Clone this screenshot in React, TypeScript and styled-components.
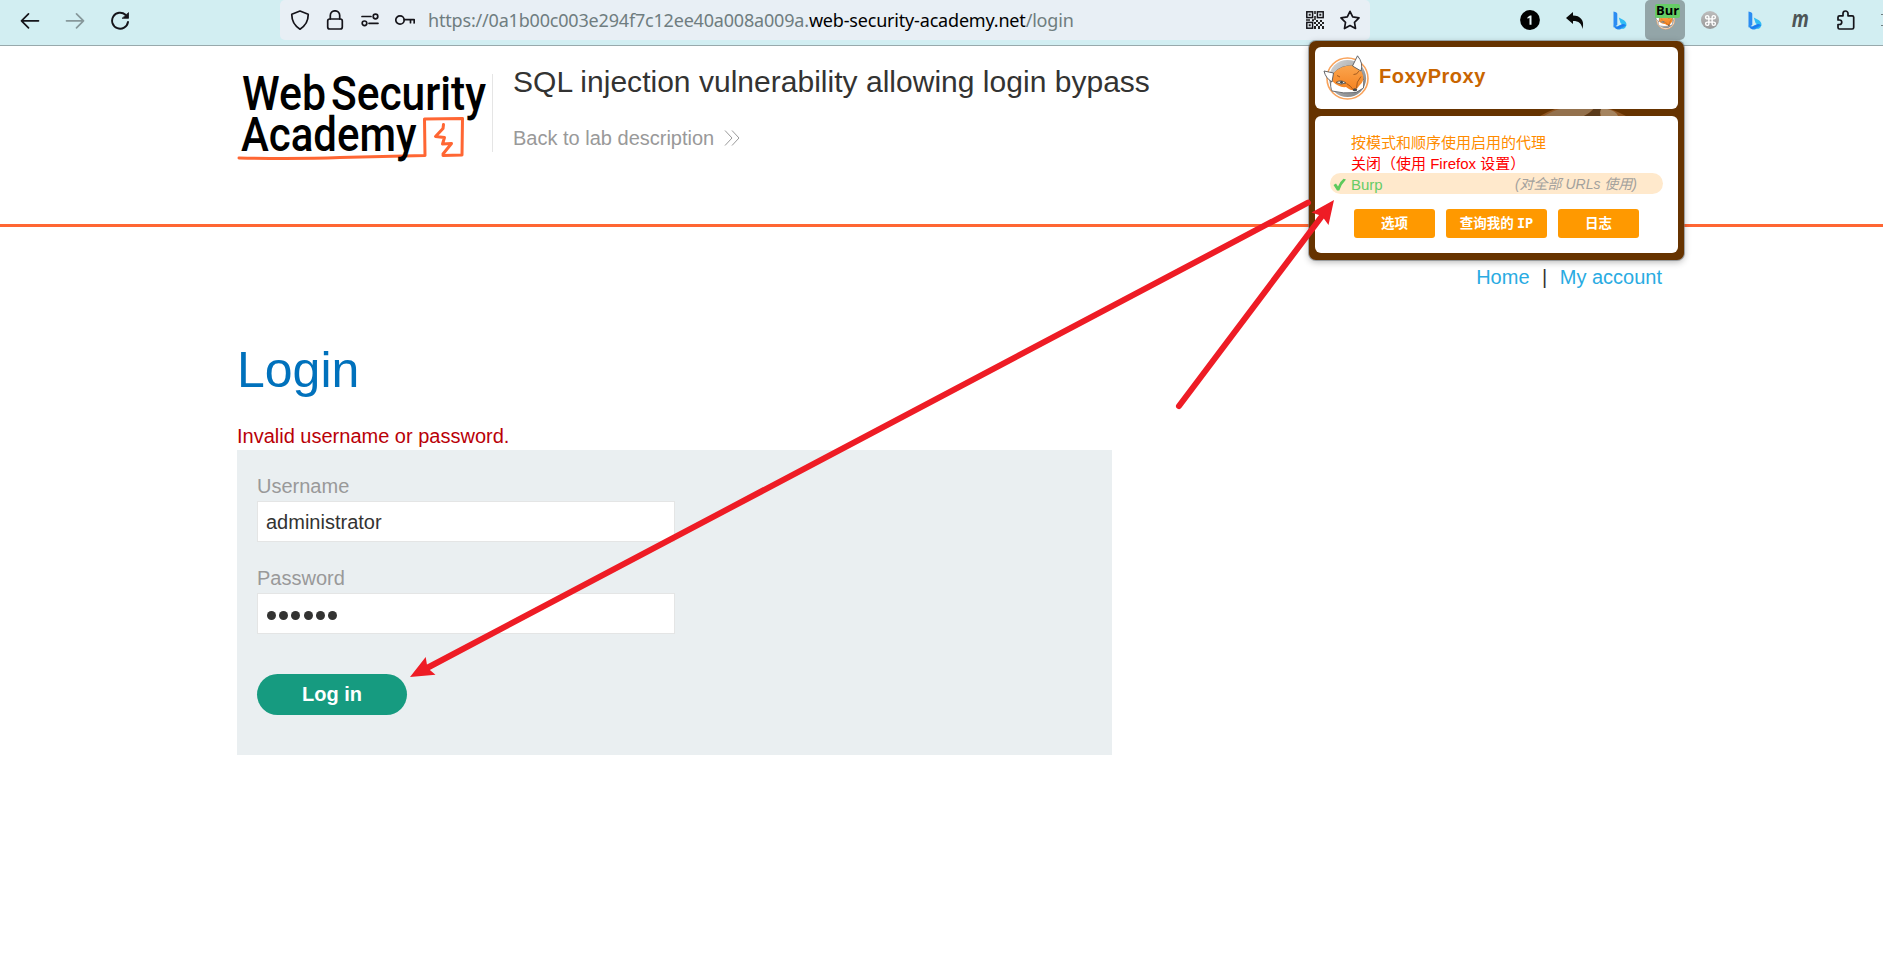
import React from 'react';
import styled, { createGlobalStyle } from 'styled-components';
import { Command } from 'lucide-react';

const GlobalStyle = createGlobalStyle`
  * { box-sizing: border-box; }
  body {
    margin: 0;
    background: #fff;
    color: #333332;
    font-family: "Liberation Sans", "Noto Sans CJK SC", sans-serif;
    font-size: 20px;
    overflow: hidden;
  }
`;

const Page = styled.div`
  position: relative;
  width: 1883px;
  height: 958px;
  overflow: hidden;
`;

/* ---------- browser toolbar ---------- */

const Toolbar = styled.div`
  display: flex;
  align-items: flex-start;
  height: 46px;
  background: #d2eef2;
  border-bottom: 1px solid #98a9ac;
`;

const NavButtons = styled.div`
  display: flex;
  align-items: center;
  flex: none;
  width: 280px;
  height: 40px;
  padding-left: 20px;
  gap: 25px;
`;

const Icon = styled.svg<{ $size?: number }>`
  display: block;
  flex: none;
  width: ${(p) => p.$size ?? 20}px;
  height: ${(p) => p.$size ?? 20}px;
  fill: none;
  stroke: #15141a;
  stroke-width: 1.7;
  stroke-linecap: round;
  stroke-linejoin: round;
`;

const FadedIcon = styled(Icon)`
  stroke: #87989b;
`;

const AddressBar = styled.div`
  display: flex;
  align-items: center;
  flex: none;
  width: 1090px;
  height: 40px;
  padding: 0 10px;
  border-radius: 5px;
  background: #e8eff5;
`;

const SiteIcons = styled.div`
  display: flex;
  gap: 15px;
  width: 138px;
`;

const Url = styled.div`
  flex: 1;
  font-family: "Noto Sans", sans-serif;
  font-size: 18px;
  line-height: 40px;
  letter-spacing: -0.185px;
  white-space: nowrap;
  color: #6f7d80;
`;

const Domain = styled.span`
  color: #000;
`;

const BarActions = styled.div`
  display: flex;
  gap: 15px;
`;

const Extensions = styled.div`
  display: flex;
  align-items: center;
  flex: none;
  height: 40px;
  padding-left: 140px;
  gap: 5px;
`;

const ExtButton = styled.div<{ $active?: boolean }>`
  position: relative;
  display: flex;
  align-items: center;
  justify-content: center;
  flex: none;
  width: 40px;
  height: 40px;
  border-radius: 5px;
  background: ${(p) => (p.$active ? '#93a5a8' : 'transparent')};
`;

const ExtBadge = styled.span`
  position: absolute;
  left: 10px;
  top: 4px;
  width: 25px;
  height: 14px;
  border-radius: 2px;
  background: #66cc66;
  color: #000;
  font: bold 13px/13px "Open Sans", sans-serif;
  text-align: center;
`;

const LetterIcon = styled.span`
  display: block;
  font: italic 700 23px/30px "Open Sans", sans-serif;
  color: #4d5557;
  transform: translateY(-2px) scaleX(0.82);
`;

const GreyDisc = styled.div`
  display: flex;
  align-items: center;
  justify-content: center;
  width: 18px;
  height: 18px;
  border-radius: 50%;
  background: linear-gradient(#bdbdbd, #999);
`;

const OverflowDots = styled.div`
  width: 3px;
  height: 12px;
  margin-left: 11px;
  border-top: 1px solid #6f7d80;
  border-bottom: 1px solid #6f7d80;
`;

/* ---------- lab header ---------- */

const LabHeader = styled.header`
  display: flex;
  height: 181px;
  padding: 5px 0 0 237px;
  border-bottom: 3px solid #ff6633;
`;

const Logo = styled.svg`
  width: 255px;
  height: 120px;
  flex: none;
  overflow: visible;
`;

const LabTitle = styled.div`
  height: 78px;
  margin-top: 23px;
  padding-left: 20px;
  border-left: 1px solid #e5e5e5;
`;

const LabName = styled.h2`
  margin: -10px 0 0;
  font-size: 30px;
  line-height: 36px;
  letter-spacing: 0.02px;
  font-weight: 400;
  white-space: nowrap;
`;

const BackLink = styled.a`
  display: flex;
  align-items: center;
  gap: 10px;
  margin-top: 26px;
  line-height: 24px;
  color: #999;
`;

/* ---------- page body ---------- */

const Main = styled.main`
  width: 1425px;
  margin-left: 237px;
`;

const AccountNav = styled.nav`
  display: flex;
  justify-content: flex-end;
  gap: 12.5px;
  padding-top: 38px;
  line-height: 24px;
`;

const NavLink = styled.a`
  color: #29abe2;
`;

const Heading = styled.h1`
  margin: 51px 0 0;
  font-size: 50px;
  line-height: 60px;
  font-weight: 400;
  color: #0071bc;
`;

const ErrorText = styled.p`
  margin: 22px 0 0;
  line-height: 28px;
  color: #b90007;
`;

const LoginForm = styled.div`
  width: 875px;
  height: 305px;
  padding: 20px;
  background: #eaeff1;
`;

const Label = styled.label`
  display: block;
  height: 31px;
  line-height: 33px;
  color: #999;
`;

const Field = styled.div`
  display: flex;
  align-items: center;
  width: 418px;
  height: 41px;
  margin-bottom: 20px;
  padding: 2px 8px 0;
  border: 1px solid #e4e5e5;
  background: #fff;
`;

const PasswordDots = styled.div`
  display: flex;
  gap: 3.2px;
  padding: 1px 0 0 1px;
`;

const Dot = styled.span`
  width: 9px;
  height: 9px;
  border-radius: 50%;
  background: #333332;
`;

const LoginButton = styled.button`
  display: block;
  width: 150px;
  height: 41px;
  margin-top: 40px;
  padding: 0;
  border: 0;
  border-radius: 21px;
  background: #169b80;
  color: #fff;
  font: bold 20px/41px "Liberation Sans", sans-serif;
`;

/* ---------- extension popup ---------- */

const Popup = styled.aside`
  position: absolute;
  left: 1309px;
  top: 41px;
  width: 375px;
  height: 219px;
  display: flex;
  flex-direction: column;
  gap: 7px;
  padding: 6px;
  border-radius: 7px;
  background: #663300;
  box-shadow: 0 0 0 1px rgba(110, 115, 118, 0.55), 0 2px 7px rgba(0, 0, 0, 0.3);
`;

const Watermark = styled.svg`
  position: absolute;
  left: 225px;
  top: 68px;
  width: 100px;
  height: 7px;
`;

const PopupHeader = styled.div`
  position: relative;
  display: flex;
  align-items: center;
  height: 62px;
  padding: 0 8px;
  border-radius: 6px;
  background: #fff;
`;

const PopupTitle = styled.div`
  padding: 0 0 4px 10px;
  font-size: 20px;
  font-weight: 700;
  color: #c96500;
  letter-spacing: 0.5px;
`;

const PopupBody = styled.div`
  position: relative;
  height: 137px;
  padding: 15px 15px 0;
  border-radius: 6px;
  background: #fff;
`;

const ProxyRow = styled.div<{ $color: string; $active?: boolean }>`
  display: flex;
  align-items: center;
  height: 21px;
  padding: 1px 26px 0 0;
  border-radius: 11px;
  font-size: 15px;
  line-height: 21px;
  white-space: pre;
  color: ${(p) => p.$color};
  background: ${(p) => (p.$active ? '#ffe9cc' : 'transparent')};
`;

const CheckSlot = styled.div`
  width: 21px;
  padding-left: 3px;
`;

const Note = styled.i`
  margin-left: auto;
  font-size: 14px;
  color: #a3a19d;
`;

const ButtonRow = styled.div`
  display: flex;
  gap: 11px;
  padding: 15px 0 0 24px;
`;

const OrangeButton = styled.button<{ $width: number }>`
  width: ${(p) => p.$width}px;
  height: 29px;
  padding: 0 0 2px;
  border: 0;
  border-radius: 3px;
  background: #ff9900;
  color: #fff;
  font: bold 13.5px/27px "Noto Sans CJK SC", sans-serif;
  white-space: nowrap;
`;

const Latin = styled.span`
  font-family: "DejaVu Sans Mono", monospace;
  font-size: 13.5px;
`;

const Arrows = styled.svg`
  position: absolute;
  left: 0;
  top: 0;
  pointer-events: none;
`;

const FoxLogo = ({ size }: { size: number }) => (
  <svg width={size} height={size} viewBox="0 0 46 46">
    <defs>
      <linearGradient id="disc" x1="0" y1="0" x2="1" y2="1">
        <stop offset="0" stopColor="#d8d9da" />
        <stop offset="0.5" stopColor="#a9abad" />
        <stop offset="1" stopColor="#77797c" />
      </linearGradient>
      <linearGradient id="fur" x1="0" y1="0" x2="0" y2="1">
        <stop offset="0" stopColor="#fba54e" />
        <stop offset="1" stopColor="#f58220" />
      </linearGradient>
    </defs>
    <circle cx="24.5" cy="23.500" r="20.5" fill="#fff" stroke="#f9a35b" strokeWidth="1.6" />
    <circle cx="24.5" cy="23.500" r="18.6" fill="url(#disc)" />
    <path d="M8 26C7 30 8 34 9 36Q20 39 33 37.500L40.500 33Q42 26 38.500 17L30 11Q18 10 11 18Z" fill="#fff" stroke="#606165" strokeWidth="0.900" />
    <path d="M10 18.500Q18 10 29.500 10.500Q37 12 39 17.500Q43 25 36 31L32.500 35.500Q27 35.500 23 32 16 33 9 26 8 22 10 18.500Z" fill="url(#fur)" />
    <path d="M1 16 10.500 18 9 27Q2.500 23 1 16ZM34.500 0.800 29.500 11 38 16Q40.500 8 34.500 0.800Z" fill="#fff" stroke="#55565a" strokeWidth="0.900" />
    <path d="M13 27.500Q18 24 23 28 18 30.500 13 27.500Z" fill="#dfe9ea" stroke="#69503b" strokeWidth="0.900" />
    <circle cx="18.500" cy="27.300" r="1.400" fill="#44494b" />
    <path d="M30.500 19.500Q34 20 36 16M23.500 28.500Q28 31 30 34.500M38 21.500Q33 27 33.500 33M14 20.500 17 22" fill="none" stroke="#9b541b" strokeWidth="0.900" />
    <ellipse cx="32" cy="34.800" rx="2.200" ry="1.500" fill="#494a4c" />
  </svg>
);

const BingIcon = () => (
  <svg width="14" height="19" viewBox="0 0 14 19">
    <defs>
      <linearGradient id="bing" x1="0" y1="0" x2="1" y2="1">
        <stop offset="0" stopColor="#2faaf7" />
        <stop offset="0.500" stopColor="#1b78ef" />
        <stop offset="1" stopColor="#33c8f4" />
      </linearGradient>
    </defs>
    <path d="M0.500 0.500 3 1.300Q4.300 1.800 4.300 3V14L0.500 16.500Z" fill="#2b8cf2" />
    <path d="M5.800 6.500 11 9.300Q14 11.500 13.400 14.500 12.800 17 10 18L4 15.500 9 13.200 7.500 12Z" fill="#30bdf4" />
    <path d="M0.500 14.500Q1 17 4 18.300 6 19 8 18L13.300 14.500Q12 12.500 9.500 13L4.300 15.500Z" fill="url(#bing)" />
  </svg>
);

export default function App() {
  return (
    <Page>
      <GlobalStyle />
      <Toolbar>
        <NavButtons>
          <Icon viewBox="0 0 20 20"><path d="M18.500 10.800H1.500M8.500 3.800l-7 7 7 7" /></Icon>
          <FadedIcon viewBox="0 0 20 20"><path d="M1.500 10.800h17M11.500 3.800l7 7-7 7" /></FadedIcon>
          <Icon viewBox="0 0 20 20">
            <path d="M15.500 4.800A8 8 0 1 0 18 12" strokeWidth="1.900" />
            <path d="M18.500 3v5.300h-6Z" fill="#15141a" strokeWidth="0.800" />
          </Icon>
        </NavButtons>
        <AddressBar>
          <SiteIcons>
            <Icon viewBox="0 0 20 20"><path d="M10 1 18.200 4.200Q18.500 14 10 19.200 1.500 14 1.800 4.200Z" /></Icon>
            <Icon viewBox="0 0 20 20">
              <rect x="2.700" y="9" width="14.600" height="10" rx="2" />
              <path d="M5.300 9V5.500a4.700 4.700 0 0 1 9.400 0V9" />
            </Icon>
            <Icon viewBox="0 0 20 20">
              <path d="M2 6.500h9M9 13.300h9" />
              <circle cx="15.500" cy="6.500" r="2.300" />
              <circle cx="4.500" cy="13.300" r="2.300" />
            </Icon>
            <Icon viewBox="0 0 20 20">
              <circle cx="5" cy="10" r="4.200" />
              <path d="M9.200 9.700H19.200V13M15.500 9.700v3" />
            </Icon>
          </SiteIcons>
          <Url>
            https://0a1b00c003e294f7c12ee40a008a009a.<Domain>web-security-academy.net</Domain>/login
          </Url>
          <BarActions>
            <Icon viewBox="0 0 20 20">
              <g strokeWidth="1.500" strokeLinejoin="miter">
                <rect x="1.800" y="1.800" width="5.800" height="5.800" />
                <rect x="12.400" y="1.800" width="5.800" height="5.800" />
                <rect x="1.800" y="12.400" width="5.800" height="5.800" />
              </g>
              <g fill="#222" stroke="none">
                <path d="M3.700 3.700h2v2h-2zM14.300 3.700h2v2h-2zM3.700 14.300h2v2h-2zM9.200 1h1.600v3H9.200zM9.200 6h1.600v4H9.200zM7 9.200h2v2H7zM11 10h2v2h-2zM15 10h2v2h-2zM13 12h2v2h-2zM17 12h2v2h-2zM11 14h2v2h-2zM15 14h2v2h-2zM13 16h2v3h-2zM17 16h2v3h-2zM9 16h2v3H9zM9 12h2v2H9zM1 9.200h4v1.500H1z" />
              </g>
            </Icon>
            <Icon viewBox="0 0 20 20">
              <path d="m10 1.300 2.700 5.600 6.300 1-4.500 4.400 1 6.200-5.500-3-5.500 3 1-6.200L1 7.900l6.300-1Z" />
            </Icon>
          </BarActions>
        </AddressBar>
        <Extensions>
          <ExtButton>
            <svg width="20" height="20" viewBox="0 0 20 20">
              <circle cx="10" cy="10" r="9.900" fill="#000" />
              <path d="M7.500 7.200 10 5.500h1.500v9.200H9.500V7.800L7.500 8.800Z" fill="#e5f4f6" />
            </svg>
          </ExtButton>
          <ExtButton>
            <svg width="20" height="20" viewBox="0 0 20 20">
              <path d="M1 8 8 2V5.500C15 5.500 20 10 17.500 19 16.500 13.500 14 11 8 11V14Z" fill="#0a0a0a" />
            </svg>
          </ExtButton>
          <ExtButton><BingIcon /></ExtButton>
          <ExtButton $active>
            <FoxLogo size={20} />
            <ExtBadge>Bur</ExtBadge>
          </ExtButton>
          <ExtButton>
            <GreyDisc><Command size={13} color="#fff" strokeWidth={2.600} /></GreyDisc>
          </ExtButton>
          <ExtButton><BingIcon /></ExtButton>
          <ExtButton><LetterIcon>m</LetterIcon></ExtButton>
          <ExtButton>
            <Icon viewBox="0 0 20 20">
              <path d="M3 7.500V7.300Q3 5.800 4.500 5.800H8V3.500a2.500 2.500 0 0 1 5 0V5.800h4.200a1.500 1.500 0 0 1 1.500 1.500V17.500a1.500 1.500 0 0 1-1.500 1.500H4.500A1.500 1.500 0 0 1 3 17.500V14.500H4.500a2.200 2.200 0 0 0 0-4.500H3Z" />
            </Icon>
          </ExtButton>
          <OverflowDots />
        </Extensions>
      </Toolbar>

      <LabHeader>
        <Logo viewBox="237 51 255 120">
          <g fill="none" stroke="#ff6633" strokeLinecap="round" strokeLinejoin="round">
            <path d="M239 158Q300 159 340 157.500L425 155.500 424.500 119 462.500 118.500 462 155 443 155.500" strokeWidth="3" />
            <path d="M443.500 124.500 443 128.500 435.500 136.500 444.500 137.500 442.500 144 451.500 143.500 443 154" strokeWidth="3" />
          </g>
          <g fill="#000" fontFamily="Roboto, sans-serif" fontWeight="500" fontSize="48">
            <text x="242" y="110" textLength="84" lengthAdjust="spacingAndGlyphs">Web</text>
            <text x="331" y="110" textLength="155" lengthAdjust="spacingAndGlyphs">Security</text>
            <text x="241" y="150.500" textLength="175.500" lengthAdjust="spacingAndGlyphs">Academy</text>
          </g>
        </Logo>
        <LabTitle>
          <LabName>SQL injection vulnerability allowing login bypass</LabName>
          <BackLink>
            Back to lab description
            <svg width="16" height="16" viewBox="0 0 16 16" fill="none" stroke="#999" strokeWidth="1">
              <path d="M1 0.500 8 8 1 15.500M8 0.500 15 8 8 15.500" />
            </svg>
          </BackLink>
        </LabTitle>
      </LabHeader>

      <Main>
        <AccountNav>
          <NavLink>Home</NavLink>
          <span>|</span>
          <NavLink>My account</NavLink>
        </AccountNav>
        <Heading>Login</Heading>
        <ErrorText>Invalid username or password.</ErrorText>
        <LoginForm>
          <Label>Username</Label>
          <Field>administrator</Field>
          <Label>Password</Label>
          <Field>
            <PasswordDots>
              {[0, 1, 2, 3, 4, 5].map((i) => <Dot key={i} />)}
            </PasswordDots>
          </Field>
          <LoginButton>Log in</LoginButton>
        </LoginForm>
      </Main>

      <Popup>
        <Watermark viewBox="0 3 100 7">
          <path d="M6 10Q48-14 92 10Z" fill="#8f5622" />
          <path d="M10 10Q22 3 30 2H60Q57 6 50 10Z" fill="#93714d" />
          <path d="M50 10Q58 6 60 2H68L66 10Z" fill="#5a3a1a" />
          <path d="M67 10Q65 5 68 2Q82 4 84 10Z" fill="#a5845f" />
        </Watermark>
        <PopupHeader>
          <FoxLogo size={46} />
          <PopupTitle>FoxyProxy</PopupTitle>
        </PopupHeader>
        <PopupBody>
          <ProxyRow $color="#ff8c00"><CheckSlot />按模式和顺序使用启用的代理</ProxyRow>
          <ProxyRow $color="#ff0000"><CheckSlot />关闭（使用 Firefox 设置）</ProxyRow>
          <ProxyRow $color="#66cc66" $active>
            <CheckSlot>
              <svg width="14" height="13" viewBox="0 0 14 13" display="block">
                <path d="M0.500 7 3 5.500 5 8.500Q7.500 3 10.500 0.800L13 1.500Q8.500 6 6.300 12.500H4Z" fill="#5cc95c" />
              </svg>
            </CheckSlot>
            Burp
            <Note>(对全部 URLs 使用)</Note>
          </ProxyRow>
          <ButtonRow>
            <OrangeButton $width={81}>选项</OrangeButton>
            <OrangeButton $width={101}>查询我的 <Latin>IP</Latin></OrangeButton>
            <OrangeButton $width={81}>日志</OrangeButton>
          </ButtonRow>
        </PopupBody>
      </Popup>

      <Arrows width="1883" height="958" viewBox="0 0 1883 958" fill="#ee1c25">
        <g stroke="#ee1c25" strokeWidth="6" strokeLinecap="round">
          <path d="M1308 202.700 427 668" />
          <path d="M1179 406 1322 216" />
        </g>
        <path d="M410 677 425.700 657 427.500 668 435.500 674.800Z" />
        <path d="M1334 200 1311.500 212.500 1322 216 1328.500 225Z" />
      </Arrows>
    </Page>
  );
}
